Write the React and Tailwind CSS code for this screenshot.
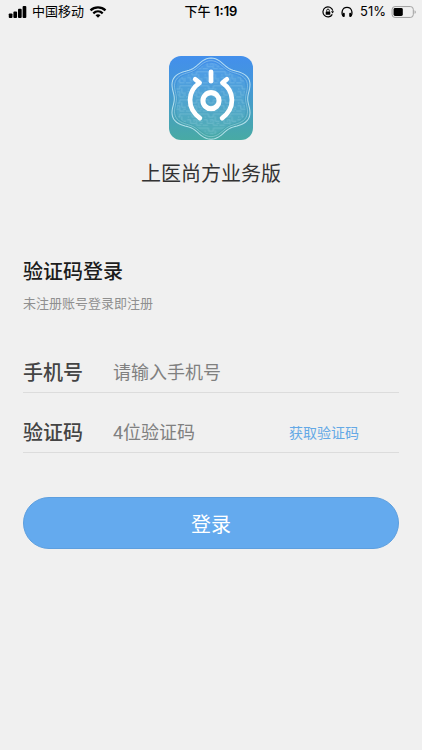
import React, { useState } from 'react';

/**
 * Builds a closed six-lobed outline around the centre of the logo.
 *
 * @param {number} radius - Mean radius of the outline.
 * @param {number} wave - Height of each lobe.
 * @returns {string} - The path data.
 */
const wavePath = (radius, wave) => {
  const points = [];
  for (let deg = 0; deg < 360; deg += 3) {
    const t = (deg * Math.PI) / 180;
    const r = radius + wave * Math.cos(6 * t);
    points.push(`${(125 + 1.06 * r * Math.sin(t)).toFixed(1)} ${(127 - r * Math.cos(t)).toFixed(1)}`);
  }
  return `M${points.join('L')}Z`;
};

function Logo() {
  return (
    <svg viewBox="0 0 250 250" className="size-21 rounded-xl" role="img" aria-label="上医尚方">
      <defs>
        <linearGradient id="tile" x1="0" y1="0" x2="0" y2="1">
          <stop offset="0" stopColor="#438fec" />
          <stop offset="0.3" stopColor="#4496dc" />
          <stop offset="1" stopColor="#48aaa4" />
        </linearGradient>
        {/* Circuit traces */}
        <pattern id="circuit" width="50" height="42" patternUnits="userSpaceOnUse">
          <path
            d="M0 5H18V14H32V5H50M4 22H14V32H30M38 12V26H50M22 22H32V38H46M0 38H16M42 32H50M8 12V16M24 28V24"
            fill="none"
            stroke="#c4ecf6"
            strokeWidth="2"
          />
        </pattern>
      </defs>
      <rect width="250" height="250" fill="url(#tile)" />
      <path d={wavePath(100, 7)} fill="#8fd8ee" fillOpacity="0.14" />
      <path d={wavePath(100, 7)} fill="url(#circuit)" fillOpacity="0.35" />
      <g fill="none" stroke="#c9ebf5">
        <path d={wavePath(112, 9)} strokeWidth="3" strokeOpacity="0.85" />
        <path d={wavePath(105, 8)} strokeWidth="2" strokeOpacity="0.6" />
      </g>
      <g fill="none" stroke="#fff" strokeWidth="14" strokeLinecap="round" strokeLinejoin="round">
        <path d="M125 47V75" />
        <circle cx="125" cy="133" r="24" strokeWidth="15" />
        <path d="M78 69L91 80C54 105 52 155 92 185" />
        <path d="M172 69L159 80C196 105 198 155 158 185" />
      </g>
    </svg>
  );
}

function StatusBar() {
  return (
    <header className="grid grid-cols-3 items-center h-6 px-2 text-[13px] text-black font-['Inter','Noto_Sans_CJK_SC',sans-serif]">
      <div className="flex items-center gap-1 whitespace-nowrap">
        <svg viewBox="0 0 20 13" className="w-5 h-3" fill="#000">
          <rect x="0" y="8" width="4" height="5" rx="1" />
          <rect x="5" y="6" width="4" height="7" rx="1" />
          <rect x="10" y="3" width="4" height="10" rx="1" />
          <rect x="15" y="0" width="4" height="13" rx="1" />
        </svg>
        <span>中国移动</span>
        <svg viewBox="0 0 17 12" className="w-5 h-3" fill="none" stroke="#000" strokeWidth="2.3">
          <path d="M1 4.4C5.2 0.4 11.8 0.4 16 4.4" />
          <path d="M3.8 7.3C6.5 4.8 10.5 4.8 13.2 7.3" />
          <path d="M8.5 11.8L6 9.3C7.4 8 9.6 8 11 9.3Z" fill="#000" stroke="none" />
        </svg>
      </div>
      <div className="text-center font-medium">
        下午 <span className="font-semibold">1:19</span>
      </div>
      <div className="flex items-center justify-end gap-1 whitespace-nowrap">
        <svg viewBox="0 0 12 12" className="size-3" fill="none" stroke="#000">
          <path d="M10.3 8.4A5 5 0 1 1 10.8 4.6" strokeWidth="1.2" />
          <path d="M9 5.2H12L10.6 7.4Z" fill="#000" stroke="none" />
          <rect x="3.7" y="5.4" width="4.6" height="3.4" rx="0.5" fill="#000" stroke="none" />
          <path d="M4.7 5.6V4.4A1.3 1.3 0 0 1 7.3 4.4V5.6" strokeWidth="0.9" />
        </svg>
        <svg viewBox="0 0 14 13" className="w-4 h-3 mx-px" fill="none" stroke="#000" strokeWidth="1.3">
          <path d="M3.4 11.4C0.4 9 1 1.4 7 1.4S13.6 9 10.6 11.4" />
          <rect x="2.4" y="7.4" width="2.2" height="4.4" rx="1" fill="#000" stroke="none" />
          <rect x="9.4" y="7.4" width="2.2" height="4.4" rx="1" fill="#000" stroke="none" />
        </svg>
        <span>51%</span>
        <svg viewBox="0 0 27 13" className="w-7 h-3 -mr-1">
          <rect x="0.6" y="0.6" width="23" height="11.8" rx="3.2" fill="none" stroke="#999" />
          <rect x="2.2" y="2.2" width="10" height="8.6" rx="1.6" fill="#000" />
          <path d="M25 4.5C26.6 5 26.6 8 25 8.5Z" fill="#999" />
        </svg>
      </div>
    </header>
  );
}

function App() {
  const [phone, setPhone] = useState('');
  const [code, setCode] = useState('');

  const handleSubmit = (e) => {
    e.preventDefault();
  };

  return (
    <div className="min-h-screen bg-[#f0f0f0] font-['Roboto','Noto_Sans_CJK_SC',sans-serif]">
      <StatusBar />

      {/* Logo and app name */}
      <div className="flex flex-col items-center gap-[18px] pt-8">
        <Logo />
        <h1 className="text-xl leading-8 text-[#333]">上医尚方业务版</h1>
      </div>

      {/* Login form */}
      <form onSubmit={handleSubmit} className="px-[23px] pt-16">
        <h2 className="pt-[2px] text-xl leading-8 font-medium text-[#1c1c1c]">验证码登录</h2>
        <p className="pt-1 text-[13px] leading-6 text-[#8f8f8f]">未注册账号登录即注册</p>

        <div className="flex items-center h-10 mt-[37px] border-b border-[#dcdcdc]">
          <label htmlFor="phone" className="w-[90px] text-xl font-medium text-[#444]">手机号</label>
          <input
            id="phone"
            type="tel"
            value={phone}
            onChange={(e) => setPhone(e.target.value)}
            placeholder="请输入手机号"
            className="flex-1 min-w-0 text-lg text-[#444] placeholder:text-[#808080] outline-none"
          />
        </div>

        <div className="flex items-center h-10 mt-5 border-b border-[#dcdcdc]">
          <label htmlFor="code" className="w-[90px] text-xl font-medium text-[#444]">验证码</label>
          <input
            id="code"
            type="text"
            value={code}
            onChange={(e) => setCode(e.target.value)}
            placeholder="4位验证码"
            className="flex-1 min-w-0 text-lg text-[#444] placeholder:text-[#808080] outline-none"
          />
          <button type="button" className="mr-10 text-sm text-[#64a9e6]">获取验证码</button>
        </div>

        <button
          type="submit"
          className="w-full h-13 pt-1 mt-11 rounded-full border border-[#5d9fdf] bg-[#64aaee] text-xl text-white"
        >
          登录
        </button>
      </form>
    </div>
  );
}

export default App;
